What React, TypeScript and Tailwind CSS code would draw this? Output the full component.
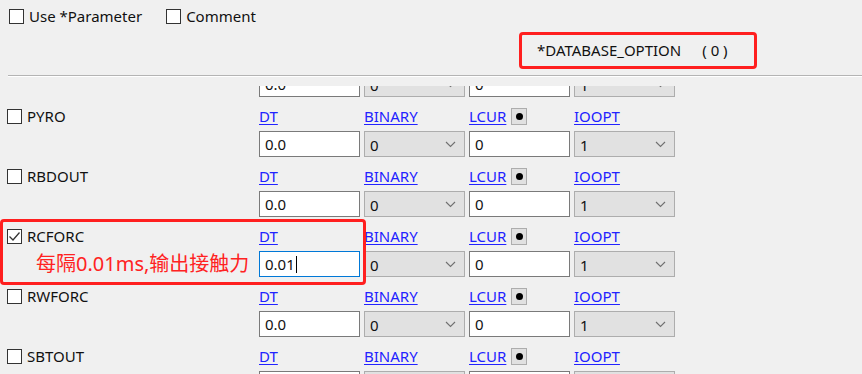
import React from "react";

const FONT = { fontFamily: '"Noto Sans", "Open Sans", "Noto Sans CJK SC", sans-serif' };

function Checkbox({ checked = false }: { checked?: boolean }) {
  return (
    <div className="w-[15px] h-[15px] border border-[#333333] bg-white flex items-center justify-center shrink-0">
      {checked && (
        <svg width="13" height="13" viewBox="0 0 13 13">
          <path d="M1.5 6.5 L5 10 L11.5 2.5" fill="none" stroke="#333" strokeWidth="1.3" />
        </svg>
      )}
    </div>
  );
}

function Chevron() {
  return (
    <svg width="11" height="7" viewBox="0 0 11 7" className="shrink-0">
      <path d="M1 1 L5.5 5.5 L10 1" fill="none" stroke="#707070" strokeWidth="1.1" />
    </svg>
  );
}

function TextBox({ value, focused = false }: { value: string; focused?: boolean }) {
  return (
    <div
      className={`w-[101px] h-[26px] bg-white border flex items-center pl-[5px] text-[15px] text-[#111] ${
        focused ? "border-[#0078d7]" : "border-[#7a7a7a]"
      }`}
    >
      <span>{value}</span>
      {focused && <span className="w-px h-[17px] bg-black ml-px" />}
    </div>
  );
}

function SelectBox({ value }: { value: string }) {
  return (
    <div className="w-[101px] h-[26px] bg-[#e1e1e1] border border-[#adadad] flex items-center justify-between pl-[5px] pr-[8px] text-[15px] text-[#111]">
      <span className="mt-[2px]">{value}</span>
      <Chevron />
    </div>
  );
}

function LinkCell({ label, button = false }: { label: string; button?: boolean }) {
  return (
    <div className="w-[101px] flex items-center">
      <span className="text-[#2222ff] underline underline-offset-2 text-[15px]">{label}</span>
      {button && (
        <div className="ml-[5px] w-[16px] h-[17px] bg-[#e1e1e1] border border-[#adadad] flex items-center justify-center">
          <div className="w-[7px] h-[7px] rounded-full bg-black" />
        </div>
      )}
    </div>
  );
}

function Row({
  name,
  checked = false,
  dt = "0.0",
  focused = false,
  note,
}: {
  name?: string;
  checked?: boolean;
  dt?: string;
  focused?: boolean;
  note?: string;
}) {
  return (
    <div className="relative h-[60px]">
      <div className="flex h-[27px] items-center">
        <div className="w-[259px] flex items-center pl-[7px]">
          {name && (
            <>
              <Checkbox checked={checked} />
              <span className="ml-[5px] text-[15px] text-[#111]">{name}</span>
            </>
          )}
        </div>
        <div className="flex gap-[4px]">
          <LinkCell label="DT" />
          <LinkCell label="BINARY" />
          <LinkCell label="LCUR" button />
          <LinkCell label="IOOPT" />
        </div>
      </div>
      <div className="mt-[1px] flex h-[26px] items-center">
        <div className="w-[259px] pl-[36px] text-[20px] leading-none text-[#ff2222]">{note}</div>
        <div className="flex gap-[4px]">
          <TextBox value={dt} focused={focused} />
          <SelectBox value="0" />
          <TextBox value="0" />
          <SelectBox value="1" />
        </div>
      </div>
      {note && (
        <div className="absolute left-0 top-[-4px] w-[366px] h-[66px] border-[3px] border-[#ff1f1f] rounded-[4px]" />
      )}
    </div>
  );
}

export default function App() {
  return (
    <div className="w-[862px] h-[374px] bg-[#f0f0f0] overflow-hidden" style={FONT}>
      <div className="flex items-center h-[16px] mt-[8px] pl-[9px] text-[15px] text-[#111]">
        <Checkbox />
        <span className="ml-[5px]">Use *Parameter</span>
        <div className="ml-[24px] flex items-center">
          <Checkbox />
          <span className="ml-[5px]">Comment</span>
        </div>
      </div>
      <div className="ml-[519px] mt-[8px] w-[238px] h-[37px] border-[3px] border-[#ff1f1f] rounded-[4px] flex items-center pl-[15px] text-[15px] text-[#111]">
        <span>*DATABASE_OPTION</span>
        <span className="ml-[21px]">( 0 )</span>
      </div>
      <div className="ml-[8px] mt-[6px] h-px bg-[#b4b4b4]" />
      <div className="ml-[8px] h-px bg-white" />
      <div className="mt-[9px] h-[289px] overflow-hidden">
        <div className="-mt-[43px]">
          <Row />
          <Row name="PYRO" />
          <Row name="RBDOUT" />
          <Row name="RCFORC" checked dt="0.01" focused note="每隔0.01ms,输出接触力" />
          <Row name="RWFORC" />
          <Row name="SBTOUT" />
        </div>
      </div>
    </div>
  );
}
